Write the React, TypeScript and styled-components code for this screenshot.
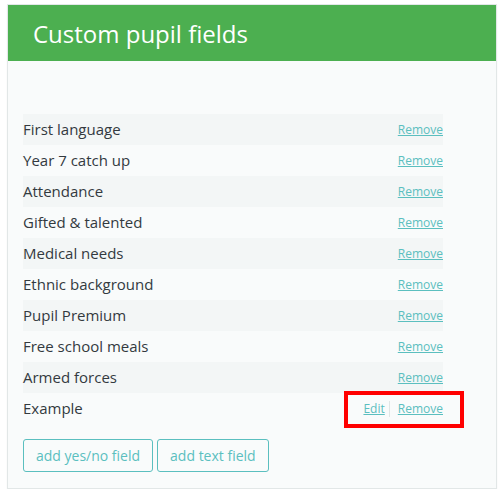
import React from 'react';
import styled, { createGlobalStyle } from 'styled-components';

const GlobalStyle = createGlobalStyle`
  body {
    margin: 0;
    padding: 4px 0 0 7px;
    background: #ffffff;
    font-family: 'Open Sans', 'Noto Sans', sans-serif;
  }
`;

const Panel = styled.div`
  position: relative;
  width: 488px;
  border: 1px solid #e2e7e7;
  background: #f9fbfb;
  box-shadow: 0 1px 1px rgba(0, 0, 0, 0.08);
`;

const Header = styled.div`
  height: 56px;
  background: #4caf50;
  display: flex;
  align-items: center;
  padding: 0 25px;
`;

const Title = styled.h2`
  margin: 0;
  color: #ffffff;
  font-size: 24px;
  font-weight: 400;
`;

const Body = styled.div`
  padding: 53px 15px 16px 15px;
`;

const List = styled.div`
  width: 420px;
  display: flex;
  flex-direction: column;
`;

const Row = styled.div<{ $striped: boolean }>`
  height: 31px;
  display: flex;
  align-items: center;
  justify-content: space-between;
  background: ${(p) => (p.$striped ? '#f3f6f6' : 'transparent')};
`;

const Label = styled.span`
  font-size: 15px;
  color: #333a3f;
  margin-top: -2px;
`;

const Actions = styled.div`
  display: flex;
  align-items: center;
`;

const ActionLink = styled.a`
  font-size: 12px;
  color: #5bbfbf;
  text-decoration: underline;
  cursor: pointer;
`;

const Divider = styled.span`
  width: 1px;
  height: 16px;
  background: #e0e6e6;
  margin: 0 8px 0 4px;
`;

const Buttons = styled.div`
  display: flex;
  gap: 4px;
  margin-top: 15px;
`;

const OutlineButton = styled.button`
  height: 33px;
  padding: 0 12px;
  background: transparent;
  border: 1px solid #5bbfbf;
  border-radius: 3px;
  color: #5bbfbf;
  font-family: 'Open Sans', 'Noto Sans', sans-serif;
  font-size: 14px;
  cursor: pointer;
`;

const Highlight = styled.div`
  position: absolute;
  left: 336px;
  top: 386px;
  width: 112px;
  height: 29px;
  border: 4px solid #ff0000;
  pointer-events: none;
`;

const fields = [
  'First language',
  'Year 7 catch up',
  'Attendance',
  'Gifted & talented',
  'Medical needs',
  'Ethnic background',
  'Pupil Premium',
  'Free school meals',
  'Armed forces',
];

export default function App() {
  return (
    <>
      <GlobalStyle />
      <Panel>
        <Header>
          <Title>Custom pupil fields</Title>
        </Header>
        <Body>
          <List>
            {fields.map((f, i) => (
              <Row key={f} $striped={i % 2 === 0}>
                <Label>{f}</Label>
                <ActionLink>Remove</ActionLink>
              </Row>
            ))}
            <Row $striped={false}>
              <Label>Example</Label>
              <Actions>
                <ActionLink>Edit</ActionLink>
                <Divider />
                <ActionLink>Remove</ActionLink>
              </Actions>
            </Row>
          </List>
          <Buttons>
            <OutlineButton>add yes/no field</OutlineButton>
            <OutlineButton>add text field</OutlineButton>
          </Buttons>
        </Body>
        <Highlight />
      </Panel>
    </>
  );
}
